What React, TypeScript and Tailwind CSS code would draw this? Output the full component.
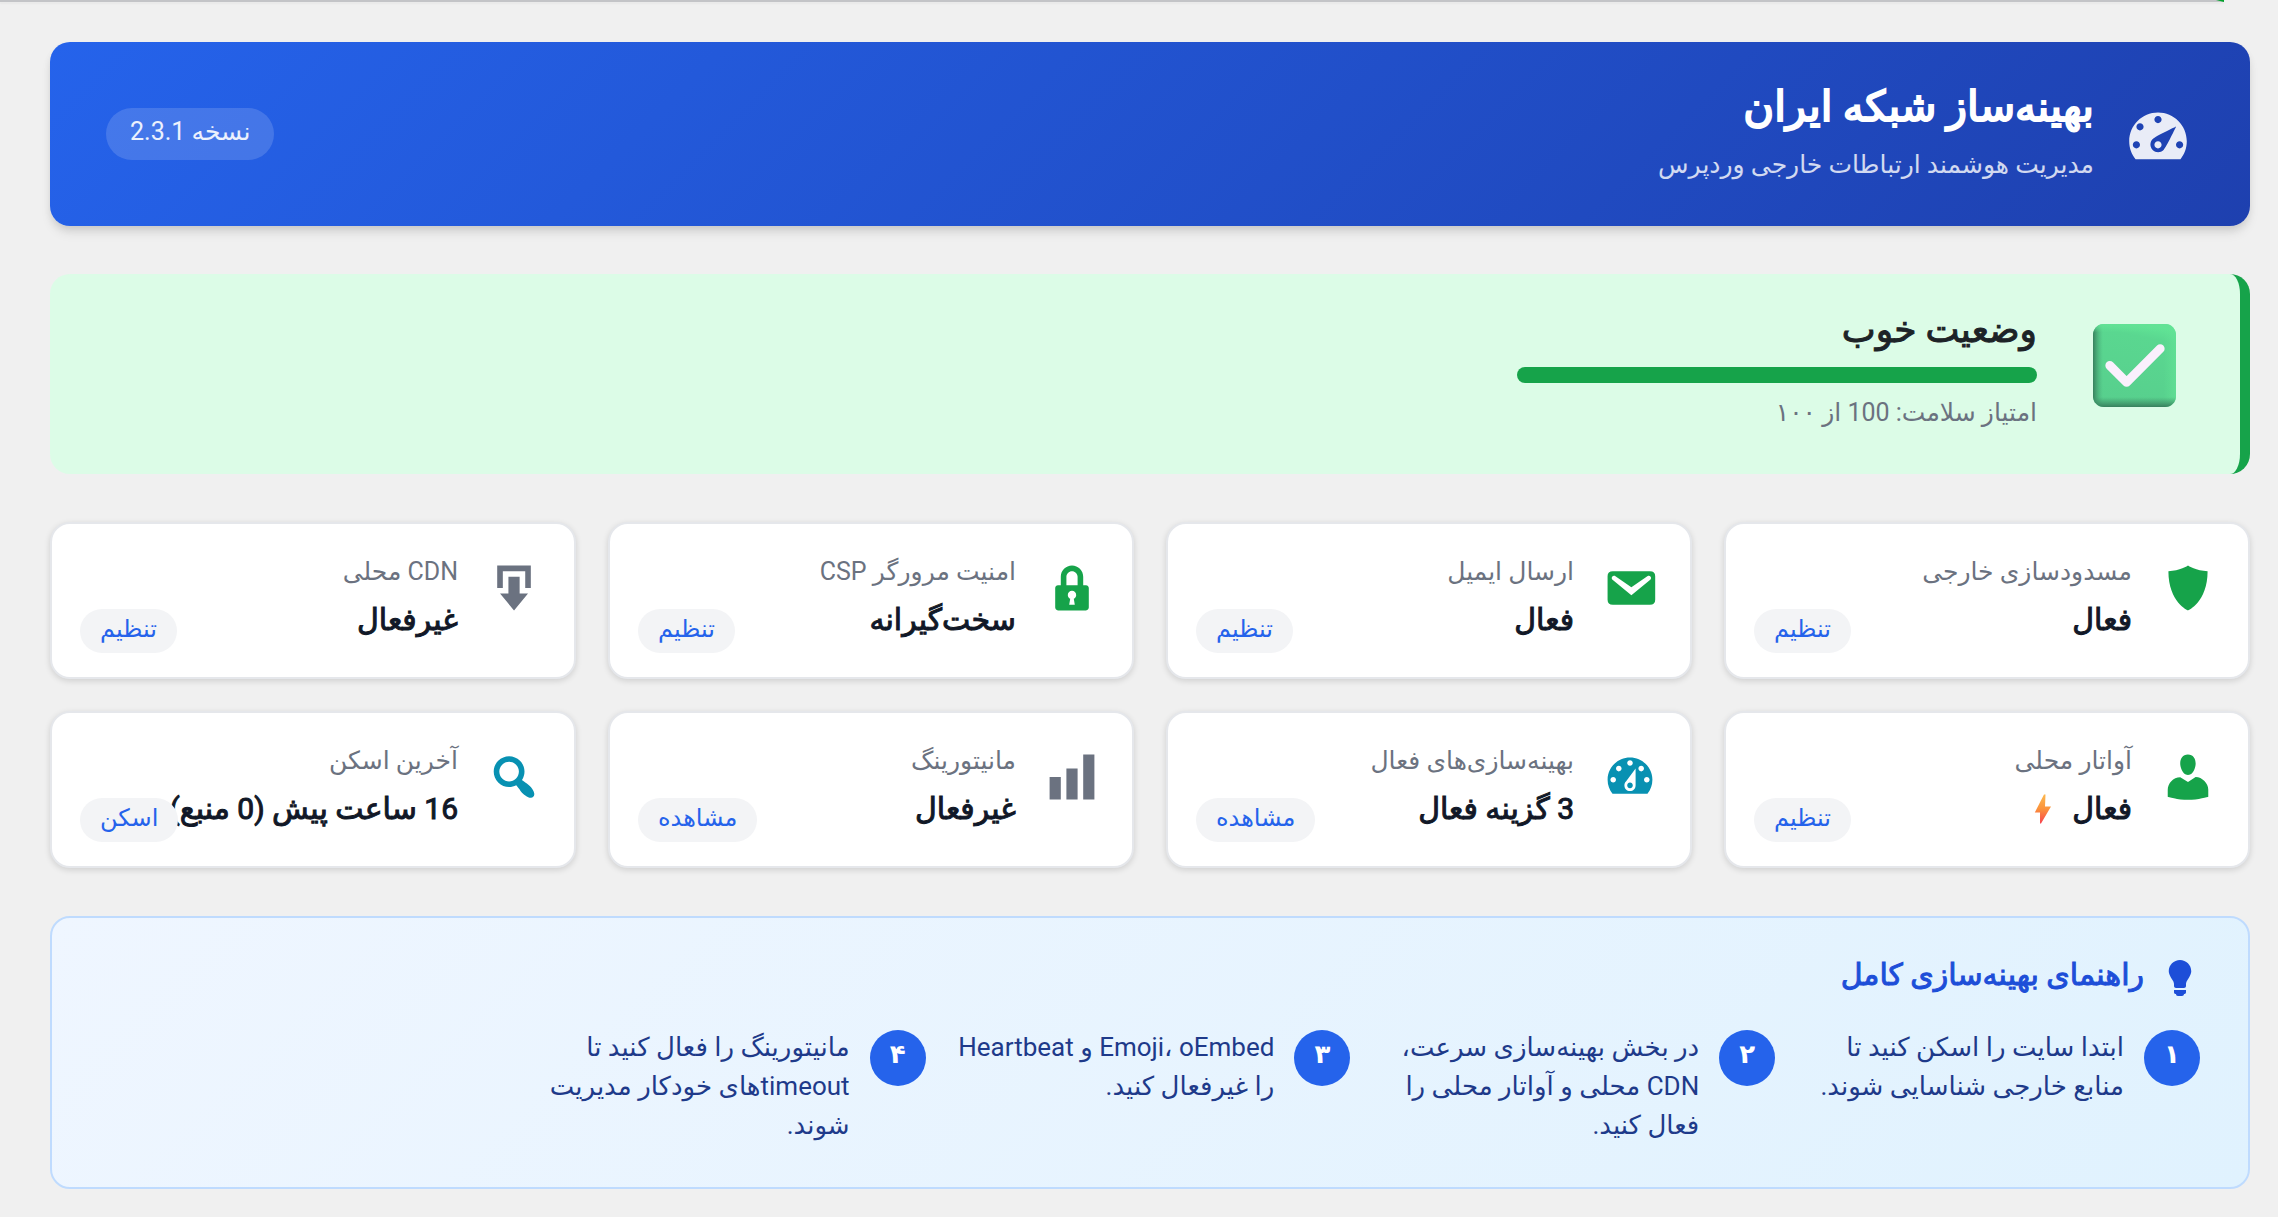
const icons = {
  performance:
    "M3.76 17.01h12.48C17.34 15.63 18 13.9 18 12c0-4.41-3.58-8-8-8s-8 3.59-8 8c0 1.9.66 3.63 1.76 5.01zM9 6c0-.55.45-1 1-1s1 .45 1 1c0 .56-.45 1-1 1s-1-.44-1-1zM4 8c0-.55.45-1 1-1s1 .45 1 1c0 .56-.45 1-1 1s-1-.44-1-1zm4.52 3.4c.84-.83 6.51-3.5 6.51-3.5s-2.66 5.68-3.49 6.51c-.84.84-2.18.84-3.02 0-.83-.83-.83-2.18 0-3.01zM3 13c0-.55.45-1 1-1s1 .45 1 1c0 .56-.45 1-1 1s-1-.44-1-1zm6 0c0 .55.45 1 1 1s1-.45 1-1c0-.56-.45-1-1-1s-1 .44-1 1zm6 0c0-.55.45-1 1-1s1 .45 1 1c0 .56-.45 1-1 1s-1-.44-1-1z",
  shield: "M10 2s3 2 7 2c0 11-7 14-7 14S3 15 3 4c4 0 7-2 7-2z",
  email:
    "M3.87 4h13.25C18.37 4 19 4.59 19 5.79v8.42c0 1.19-.63 1.79-1.88 1.79H3.87c-1.25 0-1.88-.6-1.88-1.79V5.79c0-1.2.63-1.79 1.88-1.79zm6.62 8.6l6.74-5.53c.24-.2.43-.66.13-1.07-.29-.41-.82-.42-1.17-.17l-5.7 3.86L4.8 5.83c-.35-.25-.88-.24-1.17.17-.3.41-.11.87.13 1.07z",
  lock: "M14 9h1c.55 0 1 .45 1 1v7c0 .55-.45 1-1 1H5c-.55 0-1-.45-1-1v-7c0-.55.45-1 1-1h1V6c0-2.21 1.79-4 4-4s4 1.79 4 4v3zm-2 0V6c0-1.1-.9-2-2-2s-2 .9-2 2v3h4zm-1 7l-.36-2.15c.51-.24.86-.75.86-1.35 0-.83-.67-1.5-1.5-1.5s-1.5.67-1.5 1.5c0 .6.35 1.11.86 1.35L9 16h2z",
  download: "M14.01 4v6h2V2H4v8h2.01V4h8zm-2 2v6h3l-5 6-5-6h3V6h4z",
  user: "M10 9.25c-2.27 0-2.73-3.44-2.73-3.44C7 4.02 7.82 2 9.97 2c2.16 0 2.98 2.02 2.71 3.81 0 0-.41 3.44-2.68 3.44zm0 2.57L12.72 10c2.39 0 4.52 2.33 4.52 4.53v2.49s-3.65 1.13-7.24 1.13c-3.65 0-7.24-1.13-7.24-1.13v-2.49c0-2.25 1.94-4.48 4.47-4.48z",
  dashboard:
    "M3.76 16h12.48c1.1-1.37 1.76-3.11 1.76-5 0-4.42-3.58-8-8-8s-8 3.58-8 8c0 1.89.66 3.63 1.76 5zM10 4c.55 0 1 .45 1 1s-.45 1-1 1-1-.45-1-1 .45-1 1-1zM6 6c.55 0 1 .45 1 1s-.45 1-1 1-1-.45-1-1 .45-1 1-1zm8 0c.55 0 1 .45 1 1s-.45 1-1 1-1-.45-1-1 .45-1 1-1zm-5.37 5.55L12 7v6c0 1.1-.9 2-2 2s-2-.9-2-2c0-.57.24-1.08.63-1.45zM4 10c.55 0 1 .45 1 1s-.45 1-1 1-1-.45-1-1 .45-1 1-1zm12 0c.55 0 1 .45 1 1s-.45 1-1 1-1-.45-1-1 .45-1 1-1zm-5 3c0-.55-.45-1-1-1s-1 .45-1 1 .45 1 1 1 1-.45 1-1z",
  chart: "M18 18V2h-4v16h4zm-6 0V7H8v11h4zm-6 0v-8H2v8h4z",
  search:
    "M12.14 4.18c1.87 1.87 2.11 4.75.72 6.89.12.1.22.21.36.31.2.16.47.36.81.59.34.24.56.39.66.47.42.31.73.57.94.78.32.32.6.65.84 1 .25.35.44.69.59 1.04.14.35.21.68.18 1-.02.32-.14.59-.36.81s-.49.34-.81.36c-.31.02-.65-.04-.99-.19-.35-.14-.7-.34-1.04-.59-.35-.24-.68-.52-1-.84-.21-.21-.47-.52-.77-.93-.1-.13-.25-.35-.47-.66-.22-.32-.4-.57-.56-.78-.16-.2-.29-.35-.44-.5-2.07 1.09-4.69.76-6.44-.98-2.14-2.15-2.14-5.64 0-7.78 2.15-2.15 5.63-2.15 7.78 0zm-1.41 6.36c1.36-1.37 1.36-3.58 0-4.95-1.37-1.37-3.59-1.37-4.95 0-1.37 1.37-1.37 3.58 0 4.95 1.36 1.37 3.58 1.37 4.95 0z",
  bulb: "M10 1c3.11 0 5.63 2.52 5.63 5.62 0 1.84-2.03 4.58-2.03 4.58-.33.44-.6 1.25-.6 1.8v1c0 .55-.45 1-1 1H8c-.55 0-1-.45-1-1v-1c0-.55-.27-1.36-.6-1.8 0 0-2.02-2.74-2.02-4.58C4.38 3.52 6.89 1 10 1zM7 16.87V16h6v.87c0 .62-.13 1.13-.75 1.13H12c0 .62-.4 1-1.02 1h-2c-.61 0-.98-.38-.98-1h-.25c-.62 0-.75-.51-.75-1.13z",
};

function Icon({ name, className }: { name: keyof typeof icons; className: string }) {
  return (
    <svg viewBox="0 0 20 20" fill="currentColor" aria-hidden="true" className={`shrink-0 ${className}`}>
      <path fillRule="evenodd" d={icons[name]} />
    </svg>
  );
}

function CheckBadge() {
  return (
    <svg viewBox="0 0 84 84" aria-hidden="true" className="mt-[18px] size-[83px] shrink-0">
      <defs>
        <linearGradient id="badge" x1="0.6" y1="0" x2="0.4" y2="1">
          <stop offset="0" stopColor="#60e495" />
          <stop offset="0.15" stopColor="#5ad790" />
          <stop offset="1" stopColor="#57cf8d" />
        </linearGradient>
        <linearGradient id="badge-side" x1="0" y1="0" x2="1" y2="0">
          <stop offset="0" stopColor="#38805e" />
          <stop offset="0.12" stopColor="#4aae7a" stopOpacity="0" />
          <stop offset="0.85" stopColor="#62e295" stopOpacity="0" />
          <stop offset="1" stopColor="#62e295" stopOpacity="0.7" />
        </linearGradient>
        <linearGradient id="badge-edge" x1="0" y1="0" x2="0" y2="1">
          <stop offset="0" stopColor="#62e295" />
          <stop offset="0.1" stopColor="#62e295" stopOpacity="0" />
          <stop offset="0.88" stopColor="#3f9068" stopOpacity="0" />
          <stop offset="1" stopColor="#38805e" />
        </linearGradient>
      </defs>
      <rect width="84" height="84" rx="11" fill="url(#badge)" />
      <rect width="84" height="84" rx="11" fill="url(#badge-side)" />
      <rect width="84" height="84" rx="11" fill="url(#badge-edge)" />
      <path d="M17 42L34 59L68 25" fill="none" stroke="#faf0fd" strokeWidth="9" strokeLinecap="round" strokeLinejoin="round" />
    </svg>
  );
}

function Bolt() {
  return (
    <svg viewBox="0 0 18 30" aria-hidden="true" className="h-[30px] w-[18px]">
      <defs>
        <linearGradient id="bolt" x1="0" y1="0" x2="0" y2="1">
          <stop offset="0" stopColor="#fcb84f" />
          <stop offset="0.5" stopColor="#fb923c" />
          <stop offset="1" stopColor="#f8434f" />
        </linearGradient>
      </defs>
      <path d="M10 0.5h1.5L11 12.5h6L7 29.5H6V18.5H0.8z" fill="url(#bolt)" />
    </svg>
  );
}

type Card = {
  icon: keyof typeof icons;
  tone: string;
  label: string;
  value: string;
  action: string;
  bolt?: boolean;
};

const cards: Card[] = [
  { icon: "shield", tone: "text-[#16a34a]", label: "مسدودسازی خارجی", value: "فعال", action: "تنظیم" },
  { icon: "email", tone: "text-[#16a34a]", label: "ارسال ایمیل", value: "فعال", action: "تنظیم" },
  { icon: "lock", tone: "text-[#16a34a]", label: "امنیت مرورگر CSP", value: "سخت‌گیرانه", action: "تنظیم" },
  { icon: "download", tone: "text-[#6b7280]", label: "CDN محلی", value: "غیرفعال", action: "تنظیم" },
  { icon: "user", tone: "text-[#16a34a]", label: "آواتار محلی", value: "فعال", action: "تنظیم", bolt: true },
  { icon: "dashboard", tone: "text-[#0891b2]", label: "بهینه‌سازی‌های فعال", value: "3 گزینه فعال", action: "مشاهده" },
  { icon: "chart", tone: "text-[#6b7280]", label: "مانیتورینگ", value: "غیرفعال", action: "مشاهده" },
  { icon: "search", tone: "text-[#0891b2]", label: "آخرین اسکن", value: "16 ساعت پیش (0 منبع)", action: "اسکن" },
];

const steps: { n: string; lines: string[] }[] = [
  { n: "۱", lines: ["ابتدا سایت را اسکن کنید تا", "منابع خارجی شناسایی شوند."] },
  { n: "۲", lines: ["در بخش بهینه‌سازی سرعت،", "CDN محلی و آواتار محلی را", "فعال کنید."] },
  { n: "۳", lines: ["Emoji، oEmbed و Heartbeat", "را غیرفعال کنید."] },
  { n: "۴", lines: ["مانیتورینگ را فعال کنید تا", "timeoutهای خودکار مدیریت", "شوند."] },
];

function StatusCard({ card }: { card: Card }) {
  return (
    <article className="relative flex items-start gap-7 rounded-[20px] border-2 border-[#e5e7eb] bg-white px-8 pt-6 pb-8 shadow-[0_2px_6px_rgba(0,0,0,0.14)]">
      <Icon name={card.icon} className={`mt-3 size-14 ${card.tone}`} />
      <div className="whitespace-nowrap">
        <h3 className="text-[25px] leading-[47px] text-[#6b7280]">{card.label}</h3>
        <p className="flex items-center gap-5 text-[30px] leading-[50px] text-[#111827] [-webkit-text-stroke:1px]">
          {card.value}
          {card.bolt && <Bolt />}
        </p>
      </div>
      <a href="#" className="absolute bottom-6 left-7 rounded-full bg-[#f3f4f6] px-5 pb-1 text-2xl leading-10 text-[#2563eb]">
        {card.action}
      </a>
    </article>
  );
}

export default function App() {
  return (
    <div dir="rtl" className="min-h-screen bg-[#f0f0f0] font-[Roboto,'DejaVu_Sans',sans-serif]">
      <div className="mr-[54px] h-0.5 border-r-8 border-b-2 border-r-[#00a32a] border-b-[#c3c4c7] shadow-[0_2px_2px_rgba(0,0,0,0.04)]" />
      <main className="flex flex-col gap-12 pt-10 pr-7 pb-7 pl-[50px]">
        <header className="flex items-center justify-between rounded-[20px] bg-[linear-gradient(135deg,#2563eb,#1e40af)] px-14 py-8 text-white shadow-[0_8px_12px_-2px_rgba(0,0,0,0.1),0_4px_8px_-2px_rgba(0,0,0,0.1)]">
          <div className="flex items-center gap-7">
            <Icon name="performance" className="size-[72px] opacity-90" />
            <div>
              <h1 className="text-[42px] leading-[66px] [-webkit-text-stroke:2px]">بهینه‌ساز شبکه ایران</h1>
              <p className="pb-1 text-[25px] leading-[50px] opacity-80">مدیریت هوشمند ارتباطات خارجی وردپرس</p>
            </div>
          </div>
          <span className="rounded-full bg-white/15 px-6 pb-1 text-[25px] leading-[48px] text-white/90">نسخه 2.3.1</span>
        </header>

        <section className="flex items-start gap-14 rounded-[20px] border-r-[10px] border-[#16a34a] bg-[#dcfce7] pt-8 pr-16 pb-10 pl-12">
          <CheckBadge />
          <div>
            <h2 className="text-[36px] leading-[49px] text-[#1d2327] [-webkit-text-stroke:1px]">وضعیت خوب</h2>
            <div className="mt-3 h-4 w-[520px] rounded-lg bg-[#16a34a]" />
            <p className="mt-2 text-[25px] leading-[43px] text-[#6b7280]">امتیاز سلامت: 100 از ۱۰۰</p>
          </div>
        </section>

        <section className="grid grid-cols-4 gap-8">
          {cards.map((card) => (
            <StatusCard key={card.label} card={card} />
          ))}
        </section>

        <section className="rounded-[20px] border-2 border-[#bfdbfe] bg-[linear-gradient(135deg,#eff6ff,#e0f2fe)] px-12 pt-9 pb-10">
          <div className="flex items-center gap-4 text-[#1d4ed8]">
            <Icon name="bulb" className="size-10" />
            <h2 className="pb-1.5 text-[30px] leading-[42px] [-webkit-text-stroke:1px]">راهنمای بهینه‌سازی کامل</h2>
          </div>
          <ol className="mt-7 grid grid-cols-5 gap-6">
            {steps.map((step) => (
              <li key={step.n} className="flex items-start gap-5">
                <span className="flex size-14 shrink-0 items-center justify-center rounded-full bg-[#2563eb] pb-2 text-[26px] font-bold text-white">
                  {step.n}
                </span>
                <p className="-mt-0.5 pb-0.5 text-[26px] leading-[39px] whitespace-nowrap text-[#1e3a8a]">
                  {step.lines.map((line) => (
                    <span key={line} className="block">
                      {line}
                    </span>
                  ))}
                </p>
              </li>
            ))}
          </ol>
        </section>
      </main>
    </div>
  );
}
